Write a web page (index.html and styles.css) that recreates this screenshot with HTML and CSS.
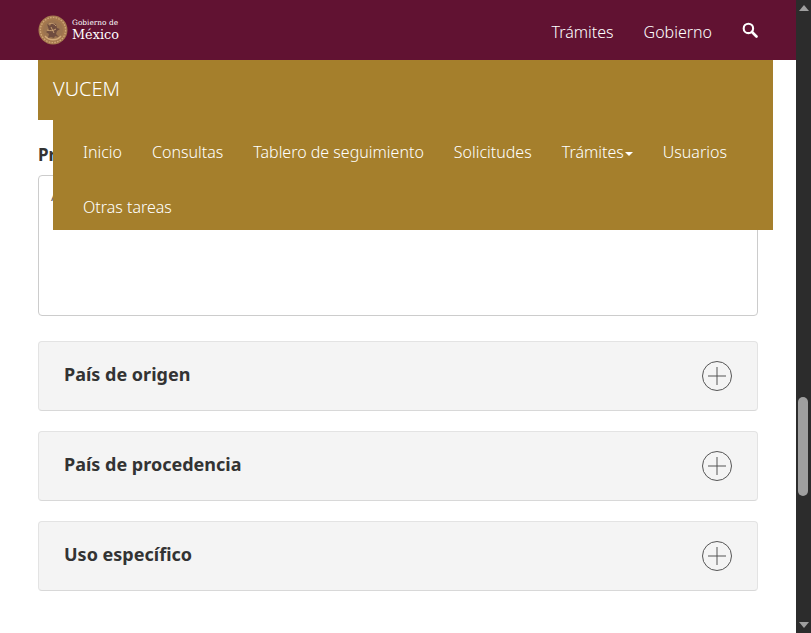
FILE: index.html
```html
<!DOCTYPE html>
<html lang="es">
<head>
<meta charset="utf-8">
<title>VUCEM</title>
<link rel="stylesheet" href="styles.css">
</head>
<body>
<div class="viewport">
  <div class="page">
    <header class="topbar">
      <a class="logo" href="#">
        <svg class="emblem" width="30" height="30" viewBox="0 0 30 30">
          <circle cx="15" cy="15" r="14.5" fill="#a5794f"/>
          <circle cx="15" cy="15" r="12.6" fill="none" stroke="#cfa676" stroke-width="1.4" stroke-dasharray="1.6 1.2"/>
          <circle cx="15" cy="15" r="10" fill="#9c7450"/>
          <path d="M9 9l3 2 2-3 4 1 1 4 3 1-3 2-1 3 3 3-4-1-1 2-3-1-3 1 1-4-3-2 3-2z" fill="#6f4c3f"/>
          <path d="M11 9c2-1 5-1 7 2M9 15c3 1 6 1 9-1M13 12l3 6" fill="none" stroke="#d0a878" stroke-width=".9"/>
          <path d="M7 21c4 5 12 5 16 0" fill="none" stroke="#d2aa7a" stroke-width="1.3"/>
        </svg>
        <span class="logo-text">
          <span class="logo-small">Gobierno de</span>
          <span class="logo-big">México</span>
        </span>
      </a>
      <nav class="topnav">
        <a href="#">Trámites</a>
        <a href="#">Gobierno</a>
        <svg class="search" width="16" height="16" viewBox="0 0 17 17">
          <circle cx="6.8" cy="6.8" r="5" fill="none" stroke="#fff" stroke-width="2.2"/>
          <path d="M10.6 10.6 15.4 15.4" stroke="#fff" stroke-width="2.8" stroke-linecap="round"/>
        </svg>
      </nav>
    </header>

    <main class="content">
      <label class="field-label">Productos</label>
      <div class="textbox"><span class="textbox-text">Aceite</span></div>
      <section class="panel"><h3>País de origen</h3><svg class="plus" width="30" height="30" viewBox="0 0 30 30"><circle cx="15" cy="15" r="14.5" fill="none" stroke="#555"/><path d="M6 15H24M15 6V24" stroke="#555"/></svg></section>
      <section class="panel"><h3>País de procedencia</h3><svg class="plus" width="30" height="30" viewBox="0 0 30 30"><circle cx="15" cy="15" r="14.5" fill="none" stroke="#555"/><path d="M6 15H24M15 6V24" stroke="#555"/></svg></section>
      <section class="panel"><h3>Uso específico</h3><svg class="plus" width="30" height="30" viewBox="0 0 30 30"><circle cx="15" cy="15" r="14.5" fill="none" stroke="#555"/><path d="M6 15H24M15 6V24" stroke="#555"/></svg></section>
    </main>

    <div class="overlay">
      <div class="brand">VUCEM</div>
      <ul class="menu">
        <li>Inicio</li>
        <li>Consultas</li>
        <li>Tablero de seguimiento</li>
        <li>Solicitudes</li>
        <li>Trámites<span class="caret"></span></li>
        <li>Usuarios</li>
        <li>Otras tareas</li>
      </ul>
    </div>
  </div>

  <aside class="scrollbar">
    <span class="arrow up"></span>
    <div class="track"><span class="thumb"></span></div>
    <span class="arrow down"></span>
  </aside>
</div>
</body>
</html>
```
FILE: styles.css
```css
* { box-sizing: border-box; }
html, body { margin: 0; height: 100%; overflow: hidden; }
body { font-family: "Noto Sans", "Open Sans", sans-serif; font-size: 16px; color: #333; background: #fff; }
.viewport { display: flex; height: 633px; }
.page { position: relative; width: 796px; flex: none; overflow: hidden; }

.topbar { height: 60px; background: #611232; display: flex; align-items: center; justify-content: space-between; padding: 4px 38px 0; }
.logo { display: flex; align-items: center; gap: 4px; margin-top: -4px; text-decoration: none; color: #fff; }
.emblem { display: block; }
.logo-text { display: flex; flex-direction: column; font-family: "DejaVu Serif", serif; line-height: 1; }
.logo-small { font-size: 7.4px; line-height: 8px; }
.logo-big { font-size: 12.8px; line-height: 15px; }
.topnav { display: flex; align-items: center; color: #fff; font-weight: 300; }
.topnav a { color: #fff; text-decoration: none; margin-right: 30px; }
.search { display: block; margin: -4px 0 0 0; }

.content { padding: 85px 38px 0; }
.field-label { display: block; font-weight: 700; font-size: 17px; color: #333; line-height: 20px; height: 30px; }
.textbox { height: 141px; border: 1px solid #ccc; border-radius: 4px; padding: 12px 12px; margin-bottom: 25px; font-size: 14px; color: #666; line-height: 16px; }
.panel { height: 70px; margin-bottom: 20px; background: #f4f4f4; border: 1px solid #e3e3e3; border-bottom-color: #d8d8d8; border-radius: 4px; display: flex; align-items: center; justify-content: space-between; padding: 0 25px 0 25px; }
.panel h3 { margin: -5px 0 0; font-size: 18px; font-weight: 700; color: #333; line-height: 24px; }
.plus { display: block; margin-top: -1px; }

.overlay { position: absolute; left: 38px; top: 60px; width: 735px; color: #fff; font-weight: 300; }
.brand { height: 60px; background: #a57f2c; padding-left: 15px; font-size: 20px; line-height: 58px; }
.menu { list-style: none; margin: 0 0 0 15px; padding: 0 30px; background: #a57f2c; display: flex; flex-wrap: wrap; column-gap: 30px; }
.menu li { height: 55px; padding-top: 21px; line-height: 22px; color: #fff; }
.caret { display: inline-block; width: 0; height: 0; margin-left: 1px; vertical-align: middle; border-top: 4px solid #fff; border-left: 4px solid transparent; border-right: 4px solid transparent; }

.scrollbar { width: 15px; flex: none; background: #2c2c2c; display: flex; flex-direction: column; align-items: center; }
.track { flex: 1; width: 100%; position: relative; }
.thumb { position: absolute; left: 2px; top: 381px; width: 10px; height: 99px; border-radius: 5px; background: #9f9f9f; }
.arrow { flex: none; width: 0; height: 0; margin: 5px 0; border-left: 5px solid transparent; border-right: 5px solid transparent; }
.arrow.up { border-bottom: 6px solid #9f9f9f; }
.arrow.down { border-top: 6px solid #9f9f9f; }
```
